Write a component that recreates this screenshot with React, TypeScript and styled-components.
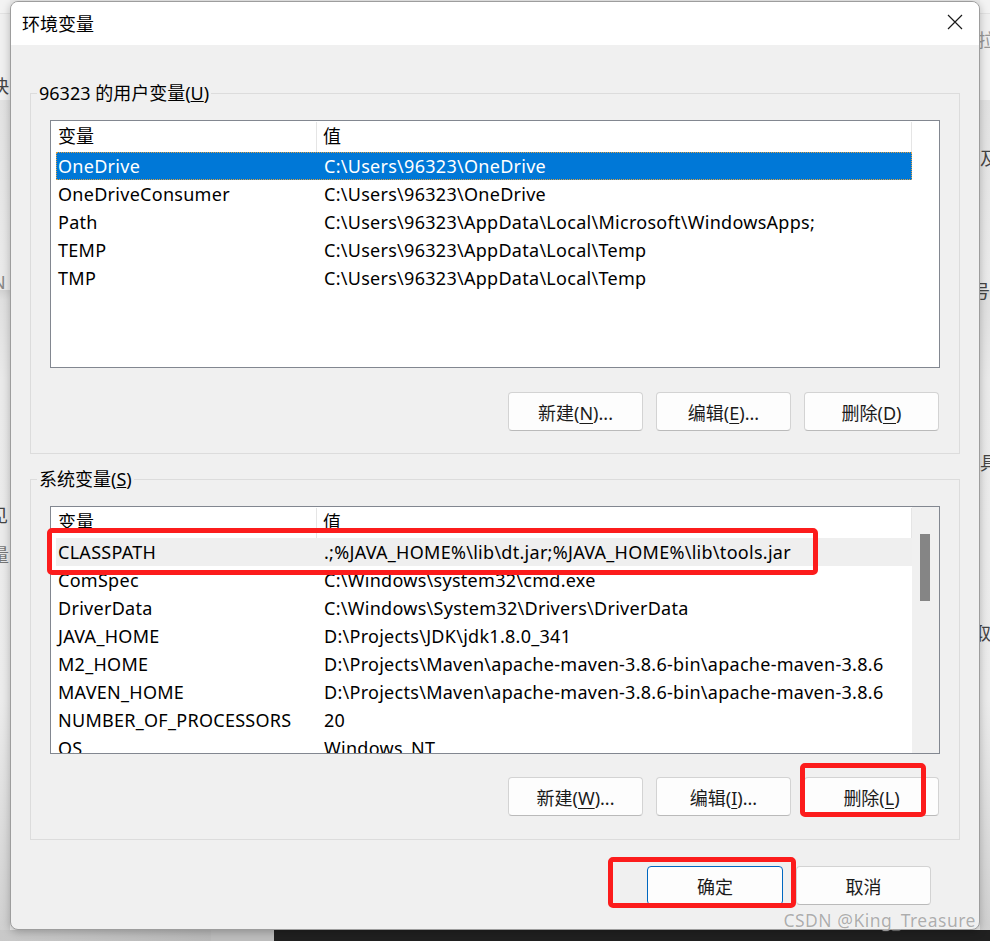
import React from "react";
import styled, { createGlobalStyle } from "styled-components";

const UI_FONT = `"Noto Sans", "Noto Sans CJK SC", sans-serif`;

const GlobalStyle = createGlobalStyle`
  html, body { margin: 0; padding: 0; }
  body { background: #e6e6e6; font-family: ${UI_FONT}; }
  * { box-sizing: border-box; }
`;

const Desktop = styled.div`
  position: relative;
  width: 990px;
  height: 941px;
  overflow: hidden;
  padding: 1px 0 0 10px;
  background: #ececec;
`;

// bits of the window behind the dialog
const BackStrip = styled.div<{ $side: "left" | "right" }>`
  position: absolute;
  top: 0;
  ${(p) => (p.$side === "left" ? "left: 0;" : "left: 980px;")}
  width: 10px;
  height: 930px;
  overflow: hidden;
  background: linear-gradient(
    to bottom,
    #f3f3f3 0,
    #f3f3f3 13px,
    #d6d6d6 13px,
    #f0f0f0 14px,
    #f0f0f0 100px,
    #e2e2e2 100px,
    #ebebeb 290px,
    #d2d2d2 290px,
    #e0e0e0 300px,
    #eaeaea 380px,
    #ececec 700px,
    #d0d0d0 930px
  );
`;

const BackGlyph = styled.span<{ $top: number; $left: number }>`
  position: absolute;
  top: ${(p) => p.$top}px;
  left: ${(p) => p.$left}px;
  font-size: 18px;
  line-height: 20px;
  color: #444;
  white-space: nowrap;
`;

const Taskbar = styled.div`
  position: absolute;
  left: 0;
  right: 0;
  top: 930px;
  bottom: 0;
  background: linear-gradient(to right, #c9c9c9 0, #b9b9b9 211px, #bdbdbd 211px, #bdbdbd 274px, #202020 274px);
`;

const Dialog = styled.div`
  position: relative;
  width: 970px;
  height: 929px;
  border: 1px solid #9d9d9d;
  border-radius: 8px;
  background: #f0f0f0;
  overflow: hidden;
  box-shadow: 0 2px 8px rgba(0, 0, 0, 0.25);
  display: flex;
  flex-direction: column;
`;

const TitleBar = styled.div`
  height: 43px;
  background: #fff;
  display: flex;
  align-items: center;
  justify-content: space-between;
  padding-left: 11px;
  flex-shrink: 0;
`;

const Title = styled.div`
  font-size: 18px;
  color: #000;
  margin-top: -2px;
`;

const CloseButton = styled.div`
  width: 48px;
  height: 43px;
  display: flex;
  align-items: center;
  justify-content: center;
  padding-bottom: 3px;
`;

const Body = styled.div`
  padding: 36px 19px 0 19px;
  display: flex;
  flex-direction: column;
`;

const Group = styled.fieldset<{ $gap?: number }>`
  margin: ${(p) => p.$gap ?? 0}px 0 0 0;
  border: 1px solid #dcdcdc;
  padding: 15px 19px ${(p) => (p.$gap ? 23 : 22)}px 19px;
  min-width: 0;
`;

const Legend = styled.legend`
  margin-left: -13px;
  padding: 0 2px;
  font-size: 18px;
  line-height: 24px;
  color: #000;
`;

const ListBox = styled.div`
  height: 248px;
  border: 1px solid #828790;
  background: #fff;
  display: flex;
  overflow: hidden;
`;

const ListContent = styled.div`
  flex: 1;
  padding-left: 5px;
  overflow: hidden;
`;

const HeaderRow = styled.div`
  display: grid;
  grid-template-columns: 261px 595px;
  height: 31px;
  padding-top: 1px;
`;

const HeaderCell = styled.div<{ $value?: boolean }>`
  font-size: 18px;
  line-height: 28px;
  color: #000;
  padding-left: ${(p) => (p.$value ? 7 : 2)}px;
  border-right: 1px solid #e5e5e5;
  margin-left: ${(p) => (p.$value ? -1 : 0)}px;
`;

const Row = styled.div<{ $state?: "selected" | "hot" }>`
  display: grid;
  grid-template-columns: 261px 595px;
  height: 28px;
  line-height: 28px;
  font-size: 18px;
  letter-spacing: 0.28px;
  white-space: nowrap;
  color: ${(p) => (p.$state === "selected" ? "#fff" : "#000")};
  background: ${(p) =>
    p.$state === "selected" ? "#0078d7" : p.$state === "hot" ? "#efefef" : "transparent"};
  outline: ${(p) => (p.$state === "selected" ? "1px dotted #e0a040" : "none")};
  outline-offset: -1px;
  width: 856px;
`;

const Cell = styled.div<{ $value?: boolean }>`
  overflow: hidden;
  padding-left: ${(p) => (p.$value ? 7 : 2)}px;
`;

const ScrollTrack = styled.div`
  width: 27px;
  background: #f0f0f0;
  flex-shrink: 0;
`;

const ScrollThumb = styled.div`
  width: 10px;
  height: 67px;
  margin: 27px 0 0 8px;
  background: #858585;
`;

const ButtonRow = styled.div<{ $top: number }>`
  display: flex;
  justify-content: flex-end;
  gap: 13px;
  margin-top: ${(p) => p.$top}px;
  padding-right: 1px;
`;

const Button = styled.button<{ $primary?: boolean; $w?: number }>`
  width: ${(p) => p.$w ?? 135}px;
  height: 39px;
  padding: 0;
  border-radius: 4px;
  border: 1px solid ${(p) => (p.$primary ? "#0067c0" : "#d3d3d3")};
  border-bottom-color: ${(p) => (p.$primary ? "#0067c0" : "#bababa")};
  background: #fdfdfd;
  font-family: ${UI_FONT};
  font-size: 18px;
  color: #1b1b1b;
  u {
    text-underline-offset: 3px;
  }
`;

const Footer = styled.div`
  display: flex;
  justify-content: flex-end;
  gap: 13px;
  margin-top: 26px;
  padding-right: 29px;
`;

// red marks drawn on the screenshot
const Mark = styled.div<{ $x: number; $y: number; $w: number; $h: number }>`
  position: absolute;
  left: ${(p) => p.$x}px;
  top: ${(p) => p.$y}px;
  width: ${(p) => p.$w}px;
  height: ${(p) => p.$h}px;
  border: 5px solid #fc1c1c;
  border-radius: 5px;
  pointer-events: none;
`;

const Watermark = styled.div`
  position: absolute;
  right: 14px;
  top: 908px;
  font-size: 17.5px;
  line-height: 24px;
  color: rgba(120, 120, 120, 0.6);
  text-shadow: 0 0 1px rgba(255, 255, 255, 0.9);
  letter-spacing: 0.5px;
`;

type Variable = [string, string];

const userVars: Variable[] = [
  ["OneDrive", "C:\\Users\\96323\\OneDrive"],
  ["OneDriveConsumer", "C:\\Users\\96323\\OneDrive"],
  ["Path", "C:\\Users\\96323\\AppData\\Local\\Microsoft\\WindowsApps;"],
  ["TEMP", "C:\\Users\\96323\\AppData\\Local\\Temp"],
  ["TMP", "C:\\Users\\96323\\AppData\\Local\\Temp"],
];

const systemVars: Variable[] = [
  ["CLASSPATH", ".;%JAVA_HOME%\\lib\\dt.jar;%JAVA_HOME%\\lib\\tools.jar"],
  ["ComSpec", "C:\\Windows\\system32\\cmd.exe"],
  ["DriverData", "C:\\Windows\\System32\\Drivers\\DriverData"],
  ["JAVA_HOME", "D:\\Projects\\JDK\\jdk1.8.0_341"],
  ["M2_HOME", "D:\\Projects\\Maven\\apache-maven-3.8.6-bin\\apache-maven-3.8.6"],
  ["MAVEN_HOME", "D:\\Projects\\Maven\\apache-maven-3.8.6-bin\\apache-maven-3.8.6"],
  ["NUMBER_OF_PROCESSORS", "20"],
  ["OS", "Windows_NT"],
];

const VarList = ({
  rows,
  selected,
  hot,
  scroll,
}: {
  rows: Variable[];
  selected?: number;
  hot?: number;
  scroll?: boolean;
}) => (
  <ListBox>
    <ListContent>
      <HeaderRow>
        <HeaderCell>变量</HeaderCell>
        <HeaderCell $value>值</HeaderCell>
      </HeaderRow>
      {rows.map(([name, value], i) => (
        <Row key={name} $state={i === selected ? "selected" : i === hot ? "hot" : undefined}>
          <Cell>{name}</Cell>
          <Cell $value>{value}</Cell>
        </Row>
      ))}
    </ListContent>
    {scroll && (
      <ScrollTrack>
        <ScrollThumb />
      </ScrollTrack>
    )}
  </ListBox>
);

const CloseIcon = () => (
  <svg width="16" height="16" viewBox="0 0 16 16">
    <path d="M1 1 L15 15 M15 1 L1 15" stroke="#1a1a1a" strokeWidth="1.2" fill="none" />
  </svg>
);

export default function App() {
  return (
    <>
      <GlobalStyle />
      <Desktop>
        <BackStrip $side="left">
          <BackGlyph $top={76} $left={-9}>快</BackGlyph>
          <BackGlyph $top={272} $left={-8} style={{ color: "#888" }}>N</BackGlyph>
          <BackGlyph $top={505} $left={-10}>见</BackGlyph>
          <BackGlyph $top={545} $left={-9} style={{ color: "#777" }}>量</BackGlyph>
        </BackStrip>
        <BackStrip $side="right">
          <BackGlyph $top={30} $left={-2} style={{ color: "#999" }}>拉</BackGlyph>
          <BackGlyph $top={148} $left={0}>及</BackGlyph>
          <BackGlyph $top={281} $left={-8}>号</BackGlyph>
          <BackGlyph $top={453} $left={-6}>]具</BackGlyph>
          <BackGlyph $top={623} $left={-7}>取</BackGlyph>
        </BackStrip>
        <Taskbar />

        <Dialog>
          <TitleBar>
            <Title>环境变量</Title>
            <CloseButton>
              <CloseIcon />
            </CloseButton>
          </TitleBar>
          <Body>
            <Group>
              <Legend>
                96323 的用户变量(<u>U</u>)
              </Legend>
              <VarList rows={userVars} selected={0} />
              <ButtonRow $top={24}>
                <Button>
                  新建(<u>N</u>)...
                </Button>
                <Button>
                  编辑(<u>E</u>)...
                </Button>
                <Button>
                  删除(<u>D</u>)
                </Button>
              </ButtonRow>
            </Group>

            <Group $gap={13}>
              <Legend>
                系统变量(<u>S</u>)
              </Legend>
              <VarList rows={systemVars} hot={0} scroll />
              <ButtonRow $top={23}>
                <Button>
                  新建(<u>W</u>)...
                </Button>
                <Button>
                  编辑(<u>I</u>)...
                </Button>
                <Button>
                  删除(<u>L</u>)
                </Button>
              </ButtonRow>
            </Group>

            <Footer>
              <Button $primary $w={136}>
                确定
              </Button>
              <Button>取消</Button>
            </Footer>
          </Body>
        </Dialog>

        <Mark $x={47} $y={528} $w={771} $h={47} />
        <Mark $x={800} $y={763} $w={126} $h={54} />
        <Mark $x={608} $y={857} $w={188} $h={51} />
        <Watermark>CSDN @King_Treasure</Watermark>
      </Desktop>
    </>
  );
}
